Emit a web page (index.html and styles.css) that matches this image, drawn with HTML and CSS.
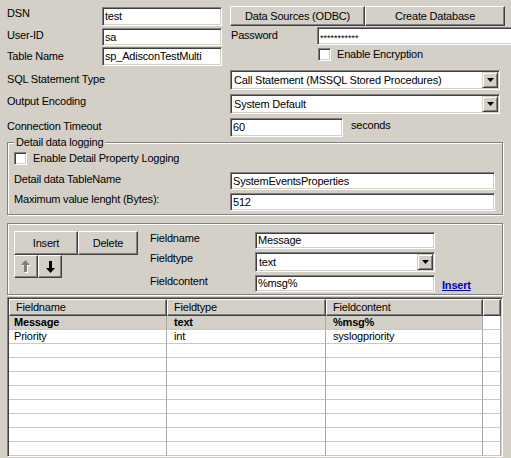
FILE: index.html
```html
<!DOCTYPE html>
<html lang="en">
<head>
  <meta charset="utf-8">
  <link rel="stylesheet" href="styles.css">
</head>
<body>
<div class="window">

    <!-- connection -->
    <div class="row r1">
        <div class="lbl">DSN</div>
        <div class="edit w120">test</div>
        <div class="btn-pair">
            <div class="btn b-odbc">Data Sources (ODBC)</div>
            <div class="btn b-db">Create Database</div>
        </div>
    </div>
    <div class="row r2">
        <div class="lbl">User-ID</div>
        <div class="edit w120">sa</div>
        <div class="lbl lbl-pwd">Password</div>
        <div class="edit pwd">***********</div>
    </div>
    <div class="row r3">
        <div class="lbl">Table Name</div>
        <div class="edit w120">sp_AdisconTestMulti</div>
        <div class="check-wrap">
            <span class="check"></span>
            <span class="check-text">Enable Encryption</span>
        </div>
    </div>
    <div class="row r4">
        <div class="lbl lbl-wide">SQL Statement Type</div>
        <div class="combo w270">
            <span class="combo-text">Call Statement (MSSQL Stored Procedures)</span>
            <span class="combo-btn"><svg width="7" height="4" viewBox="0 0 7 4"><polygon points="0,0 7,0 3.5,4" fill="#000"/></svg></span>
        </div>
    </div>
    <div class="row r5">
        <div class="lbl lbl-wide">Output Encoding</div>
        <div class="combo w270">
            <span class="combo-text">System Default</span>
            <span class="combo-btn"><svg width="7" height="4" viewBox="0 0 7 4"><polygon points="0,0 7,0 3.5,4" fill="#000"/></svg></span>
        </div>
    </div>
    <div class="row r6">
        <div class="lbl lbl-wide">Connection Timeout</div>
        <div class="edit w113">60</div>
        <div class="unit">seconds</div>
    </div>

    <!-- detail logging -->
    <fieldset class="group">
        <legend>Detail data logging</legend>
        <div class="row chk-row">
            <span class="check"></span>
            <span class="check-text">Enable Detail Property Logging</span>
        </div>
        <div class="row d1">
            <div class="lbl lbl-detail">Detail data TableName</div>
            <div class="edit w265">SystemEventsProperties</div>
        </div>
        <div class="row d2">
            <div class="lbl lbl-detail">Maximum value lenght (Bytes):</div>
            <div class="edit w265">512</div>
        </div>
    </fieldset>

    <!-- field editor -->
    <div class="group2">
        <div class="actions">
            <div class="btn b-insert">Insert</div>
            <div class="btn b-delete">Delete</div>
            <div class="btn b-arrow">
                <svg width="11" height="13" viewBox="0 0 11 13">
                    <polygon points="5.5,1 10,6 7,6 7,13 4,13 4,6 1,6" fill="#fff"/>
                    <polygon points="4.5,0 9,5 6,5 6,12 3,12 3,5 0,5" fill="#808080"/>
                </svg>
            </div>
            <div class="btn b-arrow">
                <svg width="9" height="12" viewBox="0 0 9 12">
                    <polygon points="3,0 6,0 6,7 9,7 4.5,12 0,7 3,7" fill="#000"/>
                </svg>
            </div>
        </div>
        <div class="fields">
            <div class="flbl">Fieldname</div>
            <div class="edit fedit">Message</div>
            <div></div>
            <div class="flbl">Fieldtype</div>
            <div class="combo fcombo">
                <span class="combo-text">text</span>
                <span class="combo-btn"><svg width="7" height="4" viewBox="0 0 7 4"><polygon points="0,0 7,0 3.5,4" fill="#000"/></svg></span>
            </div>
            <div></div>
            <div class="flbl">Fieldcontent</div>
            <div class="edit fedit">%msg%</div>
            <a class="link" href="#">Insert</a>
        </div>
    </div>

    <!-- field list -->
    <div class="grid-wrap">
        <table class="grid">
            <colgroup>
                <col class="c1"><col class="c2"><col class="c3"><col class="c4">
            </colgroup>
            <thead>
                <tr><th>Fieldname</th><th>Fieldtype</th><th>Fieldcontent</th><th></th></tr>
            </thead>
            <tbody>
                <tr class="sel"><td>Message</td><td>text</td><td>%msg%</td><td></td></tr>
                <tr><td>Priority</td><td>int</td><td>syslogpriority</td><td></td></tr>
                <tr><td></td><td></td><td></td><td></td></tr>
                <tr><td></td><td></td><td></td><td></td></tr>
                <tr><td></td><td></td><td></td><td></td></tr>
                <tr><td></td><td></td><td></td><td></td></tr>
                <tr><td></td><td></td><td></td><td></td></tr>
                <tr><td></td><td></td><td></td><td></td></tr>
                <tr><td></td><td></td><td></td><td></td></tr>
                <tr><td></td><td></td><td></td><td></td></tr>
            </tbody>
        </table>
    </div>

</div>
</body>
</html>
```

FILE: styles.css
```css
* {
    box-sizing: border-box;
}

body {
    margin: 0;
    background-color: #d4d0c8;
    font-family: "Liberation Sans", Arial, sans-serif;
    font-size: 11px;
    line-height: 13px;
    letter-spacing: -0.2px;
    color: #000;
}

.window {
    width: 511px;
    height: 458px;
    overflow: hidden;
    padding-left: 7px;
}

.row {
    display: flex;
    align-items: flex-start;
}

.lbl {
    width: 95px;
    flex: none;
    white-space: nowrap;
}

.lbl-wide {
    width: 223px;
}

/* sunken edit box */
.edit, .combo, .check {
    background: #fff;
    border-top: 1px solid #808080;
    border-left: 1px solid #808080;
    border-right: 1px solid #fff;
    border-bottom: 1px solid #fff;
    box-shadow: inset 1px 1px #404040, inset -1px -1px #d4d0c8;
    flex: none;
}

.edit {
    padding: 2px 2px 0 2px;
    white-space: nowrap;
    overflow: hidden;
}

.w120 { width: 120px; }
.w113 { width: 113px; }
.w265 { width: 265px; }
.w270 { width: 270px; }

/* raised button */
.btn {
    background: #d4d0c8;
    border-top: 1px solid #fff;
    border-left: 1px solid #fff;
    border-right: 1px solid #404040;
    border-bottom: 1px solid #404040;
    box-shadow: inset -1px -1px #808080;
    text-align: center;
    white-space: nowrap;
    flex: none;
}

.combo {
    display: flex;
    height: 20px;
    padding: 1px;
}

.combo-text {
    flex: 1;
    padding: 2px 0 0 2px;
    white-space: nowrap;
    overflow: hidden;
}

.combo-btn {
    width: 16px;
    flex: none;
    display: flex;
    align-items: center;
    justify-content: center;
    background: #d4d0c8;
    border-top: 1px solid #d4d0c8;
    border-left: 1px solid #d4d0c8;
    border-right: 1px solid #404040;
    border-bottom: 1px solid #404040;
    box-shadow: inset 1px 1px #fff, inset -1px -1px #808080;
}

.check {
    display: inline-block;
    width: 13px;
    height: 13px;
}

/* top rows */
.r1 { margin-top: 6px; height: 20px; }
.r1 .lbl { padding-top: 1px; }
.r1 .edit { margin-top: 1px; height: 19px; }

.btn-pair {
    display: flex;
    margin-left: 8px;
}

.btn-pair .btn {
    height: 20px;
    padding-top: 3px;
}

.b-odbc { width: 135px; }
.b-db { width: 140px; }

.r2 { height: 20px; }
.r2 .lbl { padding-top: 3px; }
.r2 .edit { margin-top: 2px; height: 18px; }
.r2 .lbl-pwd { width: 87px; margin-left: 8px; padding-left: 1px; }
.r2 .pwd {
    margin-top: 1px;
    width: 200px;
    font-size: 9px;
    letter-spacing: 0;
    padding-top: 4px;
}

.r3 { height: 20px; }
.r3 .lbl { padding-top: 4px; }
.r3 .edit { margin-top: 1px; height: 19px; }

.check-wrap {
    display: flex;
    margin-left: 96px;
    margin-top: 2px;
}

.check-text {
    margin-left: 6px;
    white-space: nowrap;
}

.r4 { margin-top: 4px; height: 20px; }
.r4 .lbl { padding-top: 3px; }

.r5 { margin-top: 4px; height: 20px; }
.r5 .lbl { padding-top: 1px; }

.r6 { margin-top: 4px; height: 19px; }
.r6 .lbl { padding-top: 2px; }
.r6 .edit { height: 19px; }

.unit {
    margin-left: 8px;
    padding-top: 1px;
}

/* group box */
.group {
    margin: -1px 0 0 0;
    width: 496px;
    min-width: 0;
    padding: 0 0 3px 6px;
    border: 1px solid #808080;
    box-shadow: inset 1px 1px #fff, 1px 1px #fff;
}

.group legend {
    padding: 0 2px;
    line-height: 13px;
    background: #d4d0c8;
}

.chk-row { margin-top: 3px; height: 13px; }

.lbl-detail { width: 216px; }

.d1 { margin-top: 7px; height: 18px; }
.d1 .lbl { padding-top: 1px; }
.d1 .edit { height: 18px; }

.d2 { margin-top: 3px; height: 18px; }
.d2 .edit { height: 18px; }

/* field editor */
.group2 {
    display: flex;
    margin-top: 8px;
    width: 496px;
    padding: 7px 0 2px 6px;
    border: 1px solid #808080;
    box-shadow: inset 1px 1px #fff, 1px 1px #fff;
}

.actions {
    width: 136px;
    flex: none;
    display: flex;
    flex-wrap: wrap;
    align-content: flex-start;
}

.b-insert, .b-delete {
    height: 24px;
    padding-top: 5px;
}

.b-insert { width: 64px; }
.b-delete { width: 60px; margin-right: 12px; }

.b-arrow {
    width: 24px;
    height: 23px;
    display: flex;
    align-items: center;
    justify-content: center;
}

.b-arrow svg {
    display: block;
}

.fields {
    display: grid;
    grid-template-columns: 105px 180px auto;
    grid-template-rows: 17px 20px 17px;
    row-gap: 3px;
    margin-top: 1px;
}

.flbl {
    white-space: nowrap;
}

.fedit {
    height: 17px;
    padding-top: 1px;
}

.fcombo {
    width: 180px;
}

.link {
    margin-left: 7px;
    padding-top: 4px;
    color: #0000c0;
    font-weight: bold;
    text-decoration: underline;
}

/* field list */
.grid-wrap {
    margin-top: 2px;
    width: 496px;
    height: 160px;
    overflow: hidden;
    background: #fff;
    border-top: 1px solid #808080;
    border-left: 1px solid #808080;
    border-right: 1px solid #fff;
    border-bottom: 1px solid #fff;
    box-shadow: inset 1px 1px #404040, inset -1px -1px #d4d0c8;
    padding: 1px;
}

.grid {
    width: 492px;
    table-layout: fixed;
    border-collapse: separate;
    border-spacing: 0;
}

.c1 { width: 158px; }
.c2 { width: 159px; }
.c3 { width: 157px; }
.c4 { width: 18px; }

.grid th {
    height: 17px;
    padding: 0 6px;
    background: #d4d0c8;
    font-weight: normal;
    text-align: left;
    border-top: 1px solid #fff;
    border-left: 1px solid #fff;
    border-right: 1px solid #404040;
    border-bottom: 1px solid #404040;
    box-shadow: inset -1px -1px #808080;
    white-space: nowrap;
}

.grid td {
    height: 14px;
    padding: 0 5px;
    border-right: 1px solid #a8a8a8;
    border-bottom: 1px solid #c8c8c8;
    white-space: nowrap;
    overflow: hidden;
}

.grid td:nth-child(2), .grid td:nth-child(3) {
    padding-left: 7px;
}

.grid tr.sel td {
    background: #d4d0c8;
    font-weight: bold;
}

.grid tr.sel td:last-child {
    background: #fff;
}
```
